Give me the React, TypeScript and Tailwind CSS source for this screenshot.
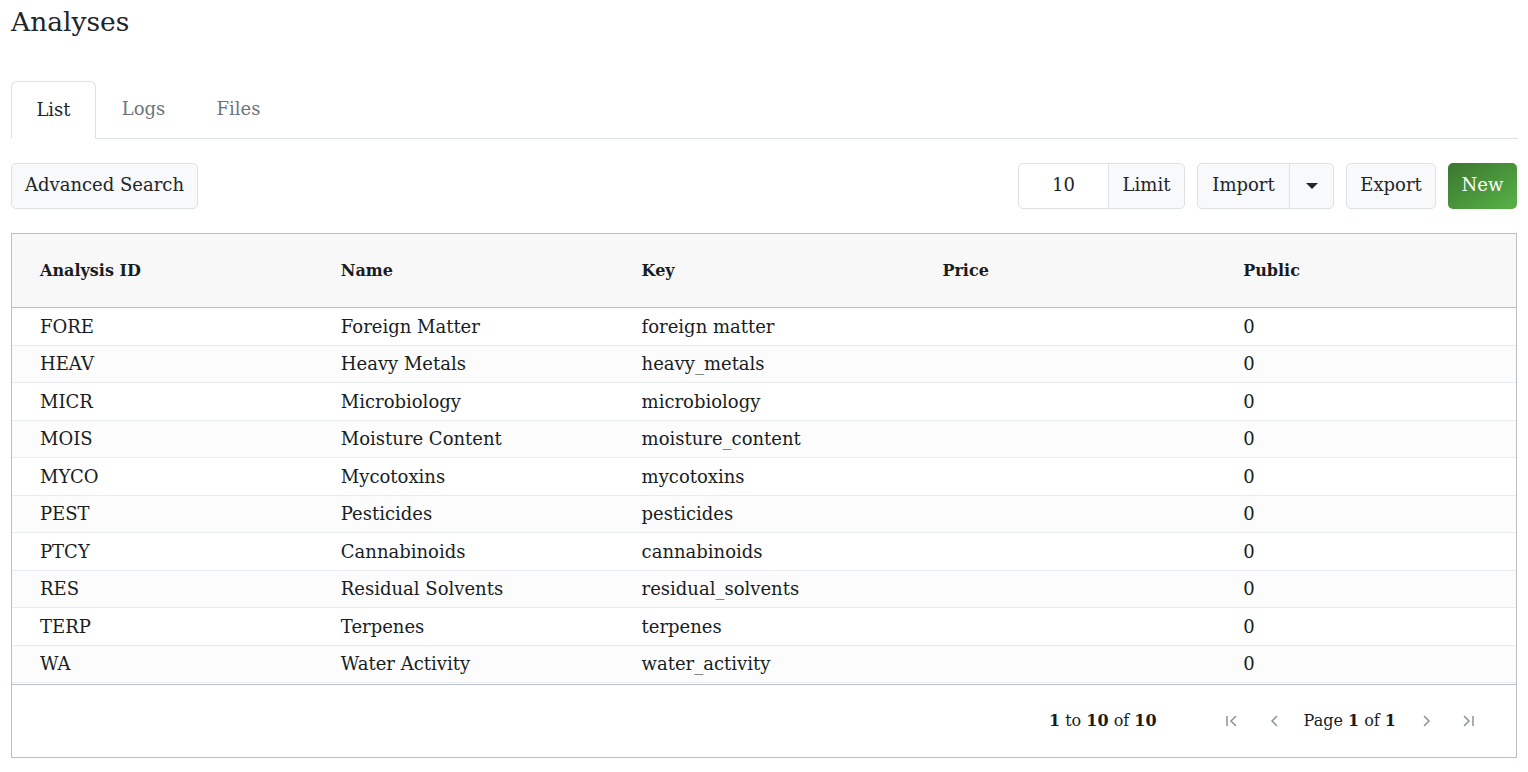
import React from "react";

const rows = [
  ["FORE", "Foreign Matter", "foreign matter", "", "0"],
  ["HEAV", "Heavy Metals", "heavy_metals", "", "0"],
  ["MICR", "Microbiology", "microbiology", "", "0"],
  ["MOIS", "Moisture Content", "moisture_content", "", "0"],
  ["MYCO", "Mycotoxins", "mycotoxins", "", "0"],
  ["PEST", "Pesticides", "pesticides", "", "0"],
  ["PTCY", "Cannabinoids", "cannabinoids", "", "0"],
  ["RES", "Residual Solvents", "residual_solvents", "", "0"],
  ["TERP", "Terpenes", "terpenes", "", "0"],
  ["WA", "Water Activity", "water_activity", "", "0"],
];

const headers = ["Analysis ID", "Name", "Key", "Price", "Public"];

export default function App() {
  return (
    <div
      className="bg-white text-[#212529] px-[11px] pt-[4px]"
      style={{ fontFamily: '"DejaVu Serif", "Liberation Serif", serif' }}
    >
      <h1 className="text-[26.5px] leading-[36px] font-normal m-0">Analyses</h1>

      <div className="mt-[41px] flex border-b border-[#dee2e6] mr-[-1px]">
        <div className="h-[58px] -mb-px w-[85px] flex items-center justify-center border border-[#dee2e6] border-b-white rounded-t-[6px] bg-white text-[18px] text-[#212529] pb-[2px]">
          List
        </div>
        <div className="h-[57px] w-[95px] flex items-center justify-center text-[18px] text-[#6c757d] pb-[2px]">
          Logs
        </div>
        <div className="h-[57px] w-[95px] flex items-center justify-center text-[18px] text-[#6c757d] pb-[2px]">
          Files
        </div>
      </div>

      <div className="mt-[24px] flex items-center">
        <button className="h-[46px] w-[187px] border border-[#dee2e6] rounded-[5px] bg-[#f8f9fa] text-[18px] text-[#212529] pb-[3px]">
          Advanced Search
        </button>
        <div className="flex-1" />
        <div className="flex">
          <div className="h-[46px] w-[91px] border border-[#dee2e6] rounded-l-[5px] bg-white flex items-center justify-center text-[18px] pb-[3px]">
            10
          </div>
          <button className="h-[46px] w-[77px] border border-[#dee2e6] rounded-r-[5px] bg-[#f8f9fa] text-[18px] -ml-px pb-[3px]">
            Limit
          </button>
        </div>
        <div className="flex ml-[12px]">
          <button className="h-[46px] w-[93px] border border-[#dee2e6] rounded-l-[5px] bg-[#f8f9fa] text-[18px] pb-[3px]">
            Import
          </button>
          <button className="h-[46px] w-[45px] border border-[#dee2e6] rounded-r-[5px] bg-[#f8f9fa] -ml-px flex items-center justify-center">
            <svg width="12" height="7" viewBox="0 0 12 7">
              <path d="M0 0 L12 0 L6 6 Z" fill="#212529" />
            </svg>
          </button>
        </div>
        <button className="ml-[12px] h-[46px] w-[90px] border border-[#dee2e6] rounded-[5px] bg-[#f8f9fa] text-[18px] pb-[3px]">
          Export
        </button>
        <button className="ml-[12px] h-[46px] w-[69px] rounded-[5px] text-white text-[18px] bg-gradient-to-br from-[#3b7630] to-[#58b347] pb-[3px]">
          New
        </button>
      </div>

      <div className="mt-[24px] border border-[#babfc7] h-[525px] flex flex-col">
        <div className="h-[74px] bg-[#f8f8f8] border-b border-[#babfc7] grid grid-cols-5 items-center">
          {headers.map((h) => (
            <div key={h} className="pl-[28px] text-[16px] font-bold text-[#181d1f]">
              {h}
            </div>
          ))}
        </div>
        <div className="flex flex-col">
          {rows.map((r, i) => (
            <div
              key={r[0]}
              className={`h-[37.5px] grid grid-cols-5 items-center border-b border-[#e9ecef] ${
                i % 2 === 1 ? "bg-[#fcfcfc]" : "bg-white"
              }`}
            >
              {r.map((c, j) => (
                <div key={j} className="pl-[28px] text-[18px] text-[#181d1f] whitespace-nowrap">
                  {c}
                </div>
              ))}
            </div>
          ))}
        </div>
        <div className="mt-[1px] border-t border-[#babfc7] flex-1 flex items-center justify-end pr-[40px] text-[16px] text-[#181d1f]">
          <span>
            <b>1</b> to <b>10</b> of <b>10</b>
          </span>
          <div className="ml-[67px] flex items-center text-[#8c9196]">
            <svg width="16" height="16" viewBox="0 0 16 16" fill="none" stroke="currentColor" strokeWidth="1.5">
              <path d="M3 3 V13" />
              <path d="M12 3 L7 8 L12 13" />
            </svg>
            <svg className="ml-[27px]" width="16" height="16" viewBox="0 0 16 16" fill="none" stroke="currentColor" strokeWidth="1.5">
              <path d="M10 3 L5 8 L10 13" />
            </svg>
          </div>
          <span className="ml-[21px]">
            Page <b>1</b> of <b>1</b>
          </span>
          <div className="ml-[22px] flex items-center text-[#8c9196]">
            <svg width="16" height="16" viewBox="0 0 16 16" fill="none" stroke="currentColor" strokeWidth="1.5">
              <path d="M6 3 L11 8 L6 13" />
            </svg>
            <svg className="ml-[26px]" width="16" height="16" viewBox="0 0 16 16" fill="none" stroke="currentColor" strokeWidth="1.5">
              <path d="M4 3 L9 8 L4 13" />
              <path d="M13 3 V13" />
            </svg>
          </div>
        </div>
      </div>
    </div>
  );
}
